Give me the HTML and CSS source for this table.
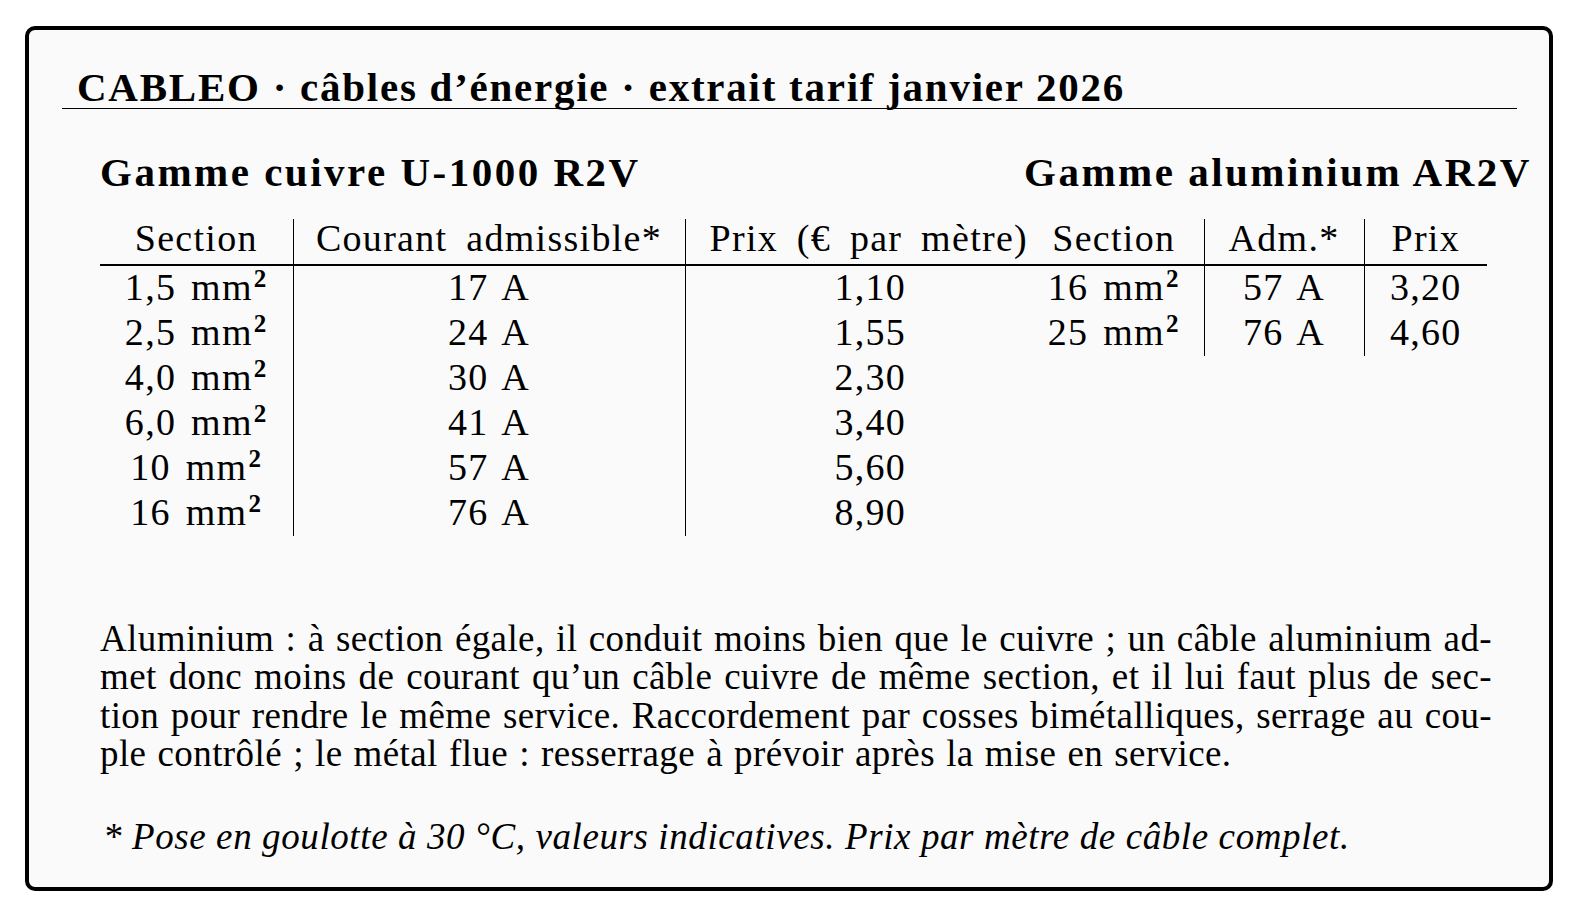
FILE: index.html
```html
<!DOCTYPE html>
<html lang="fr">
<head>
<meta charset="utf-8">
<title>CABLEO · extrait tarif janvier 2026</title>
<link rel="stylesheet" href="styles.css">
</head>
<body>
<div class="sheet">
  <h1 class="title">CABLEO · câbles d’énergie · extrait tarif janvier 2026</h1>
  <div class="ranges">
    <section class="range range-cu">
      <h2 class="range-title">Gamme cuivre U-1000 R2V</h2>
      <table class="grid grid-cu">
        <colgroup><col class="c-sec"><col class="c-cur"><col class="c-prix"></colgroup>
        <thead>
          <tr><th class="rule">Section</th><th class="rule">Courant admissible*</th><th class="prix prix-head">Prix (€ par mètre)</th></tr>
        </thead>
        <tbody>
          <tr><td class="rule">1,5 mm<span class="sq">2</span></td><td class="rule">17 A</td><td class="prix">1,10</td></tr>
          <tr><td class="rule">2,5 mm<span class="sq">2</span></td><td class="rule">24 A</td><td class="prix">1,55</td></tr>
          <tr><td class="rule">4,0 mm<span class="sq">2</span></td><td class="rule">30 A</td><td class="prix">2,30</td></tr>
          <tr><td class="rule">6,0 mm<span class="sq">2</span></td><td class="rule">41 A</td><td class="prix">3,40</td></tr>
          <tr><td class="rule">10 mm<span class="sq">2</span></td><td class="rule">57 A</td><td class="prix">5,60</td></tr>
          <tr><td class="rule">16 mm<span class="sq">2</span></td><td class="rule">76 A</td><td class="prix">8,90</td></tr>
        </tbody>
      </table>
    </section>
    <section class="range range-al">
      <h2 class="range-title">Gamme aluminium AR2V</h2>
      <table class="grid grid-al">
        <colgroup><col class="a-sec"><col class="a-adm"><col class="a-prix"></colgroup>
        <thead>
          <tr><th class="rule">Section</th><th class="rule">Adm.*</th><th>Prix</th></tr>
        </thead>
        <tbody>
          <tr><td class="rule">16 mm<span class="sq">2</span></td><td class="rule">57 A</td><td>3,20</td></tr>
          <tr><td class="rule">25 mm<span class="sq">2</span></td><td class="rule">76 A</td><td>4,60</td></tr>
        </tbody>
      </table>
    </section>
  </div>
  <p class="note">
    <span class="jline">Aluminium : à section égale, il conduit moins bien que le cuivre ; un câble aluminium ad-</span>
    <span class="jline">met donc moins de courant qu’un câble cuivre de même section, et il lui faut plus de sec-</span>
    <span class="jline">tion pour rendre le même service. Raccordement par cosses bimétalliques, serrage au cou-</span>
    <span class="lline">ple contrôlé ; le métal flue : resserrage à prévoir après la mise en service.</span>
  </p>
  <p class="foot">* Pose en goulotte à 30 °C, valeurs indicatives. Prix par mètre de câble complet.</p>
</div>
</body>
</html>
```

FILE: styles.css
```css
html, body {
  margin: 0;
  padding: 0;
  background: #ffffff;
}

body {
  padding: 26px 0 0 25px;
  font-family: "Liberation Serif", "Times New Roman", serif;
  color: #000;
}

.sheet {
  box-sizing: border-box;
  width: 1528px;
  height: 865px;
  border: 4px solid #000;
  border-radius: 10px;
  background: #fafafa;
  padding: 39px 32px 0 33px;
}

.title {
  margin: 0;
  padding: 0 0 3px 15px;
  font-size: 41px;
  line-height: 36px;
  font-weight: bold;
  letter-spacing: 1.75px;
  white-space: nowrap;
  border-bottom: 1.5px solid #000;
}

.ranges {
  display: flex;
  margin: 44.5px 0 0 38px;
}

.range {
  flex: 0 0 auto;
}

.range-cu {
  width: 924px;
}

.range-al {
  width: 503px;
}

.range-title {
  margin: 0 0 29px 0;
  font-size: 41px;
  line-height: 36px;
  font-weight: bold;
  letter-spacing: 2.5px;
  white-space: nowrap;
}

.range-al .range-title {
  text-align: right;
}

.grid {
  border-collapse: collapse;
  table-layout: fixed;
  font-size: 38px;
  letter-spacing: 1.3px;
  word-spacing: 4px;
}

.grid-cu { width: 924px; }
.grid-al { width: 463px; }

.c-sec { width: 193px; }
.c-cur { width: 392px; }
.c-prix { width: 339px; }
.a-sec { width: 180px; }
.a-adm { width: 160px; }
.a-prix { width: 123px; }

.grid th,
.grid td {
  padding: 0;
  text-align: center;
  white-space: nowrap;
  font-weight: normal;
}

.grid th {
  line-height: 39px;
  padding-bottom: 6px;
  border-bottom: 2px solid #000;
  word-spacing: 8px;
}

.grid td {
  line-height: 43px;
  padding-bottom: 2px;
}

.grid .rule {
  border-right: 1.5px solid #000;
}

.grid .prix {
  padding-left: 31px;
}

.grid .prix-head {
  padding-left: 24px;
}

.sq {
  font-size: 0.66em;
  font-weight: bold;
  vertical-align: 0.5em;
  line-height: 0;
  margin-left: 1px;
}

.note {
  width: 1392px;
  margin: 84px 0 0 38px;
  font-size: 37px;
  line-height: 38.5px;
  letter-spacing: 0.4px;
  word-spacing: 1.5px;
}

.jline {
  display: block;
  text-align: justify;
  text-align-last: justify;
  white-space: nowrap;
}

.lline {
  display: block;
}

.foot {
  margin: 44px 0 0 41px;
  font-size: 37px;
  line-height: 38.5px;
  font-style: italic;
  letter-spacing: 0.6px;
}
```
